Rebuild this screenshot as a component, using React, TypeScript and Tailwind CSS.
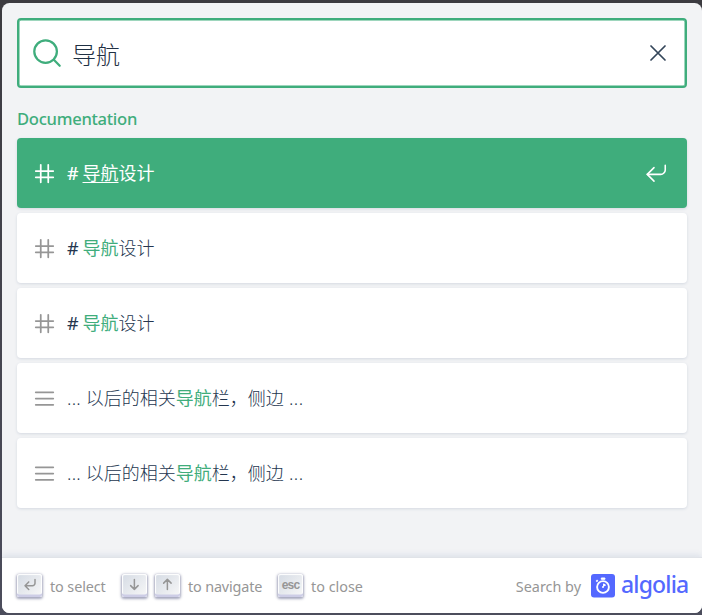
import type { ReactNode } from 'react';

const latin = "font-['Noto_Sans','Noto_Sans_CJK_SC',sans-serif]";

function Hit({ active = false, icon, children }: { active?: boolean; icon: 'hash' | 'lines'; children: ReactNode }) {
  return (
    <li
      className={
        active
          ? 'flex h-[70px] items-center rounded bg-[#3fad7c] px-[15px] text-white shadow-[0_1px_3px_0_#d4d9e1]'
          : 'flex h-[70px] items-center rounded bg-white px-[15px] text-[#24364f] shadow-[0_1px_3px_0_#d4d9e1]'
      }
    >
      <svg
        className={active ? 'size-[25px] shrink-0 text-white' : 'size-[25px] shrink-0 text-[#969696]'}
        viewBox="0 0 20 20"
        fill="none"
        stroke="currentColor"
        strokeWidth="1.4"
        strokeLinecap="round"
        strokeLinejoin="round"
      >
        {icon === 'hash' ? (
          <path d="M13 13h4-4V8H7v5h6v4-4H7V8H3h4V3v5h6V3v5h4-4v5zm-6 0v4-4H3h4z" />
        ) : (
          <path d="M17 5H3h14zm0 5H3h14zm0 5H3h14z" />
        )}
      </svg>
      <span className="ml-[10px] flex-1 whitespace-pre text-[18px] leading-[22px] font-light">{children}</span>
      {active && (
        <svg
          className="mr-[5px] size-[22.5px]"
          viewBox="0 0 20 20"
          fill="none"
          stroke="currentColor"
          strokeWidth="1.4"
          strokeLinecap="round"
          strokeLinejoin="round"
        >
          <path d="M18 3v4c0 2-2 4-4 4H2" />
          <path d="M8 17l-6-6 6-6" />
        </svg>
      )}
    </li>
  );
}

function Mark({ children }: { children: ReactNode }) {
  return <span className="font-normal text-[#3fad7c]">{children}</span>;
}

function Snippet() {
  return (
    <>
      <span className="tracking-[0.25px]">... </span>
      <span>
        以后的相关<Mark>导航</Mark>栏，侧边
      </span>
      <span className="tracking-[0.45px]"> ...</span>
    </>
  );
}

function Key({ children }: { children: ReactNode }) {
  return (
    <span className="flex h-[23px] w-[25px] shrink-0 items-center justify-center rounded-[2.5px] bg-[linear-gradient(-225deg,#d5dbe4,#f8f8f8)] pb-[2px] text-[#969696] shadow-[inset_0_-2.5px_0_0_#cdcde6,inset_0_0_1px_1px_#fff,0_1px_2.5px_1px_rgba(30,35,90,0.4)]">
      {children}
    </span>
  );
}

function KeyIcon({ d }: { d: string }) {
  return (
    <Key>
      <svg
        className="size-[18.75px]"
        viewBox="0 0 15 15"
        fill="none"
        stroke="currentColor"
        strokeWidth="1.2"
        strokeLinecap="round"
        strokeLinejoin="round"
      >
        <path d={d} />
      </svg>
    </Key>
  );
}

export default function App() {
  return (
    <div className={`h-[615px] w-[702px] overflow-hidden bg-[linear-gradient(#3c3b40,#4c4d5c)] pt-[3px] pl-[2px] ${latin}`}>
      <div className="flex h-[610px] w-[700px] flex-col overflow-hidden rounded-[7.5px] bg-[#f2f3f5]">
        <header className="px-[15px] pt-[15px]">
          <div className="flex h-[70px] items-center rounded border-2 border-[#3fad7c] bg-white pr-[12px] pl-[13px] shadow-[inset_0_0_0_0.5px_#3fad7c]">
            <svg
              className="size-[30px] text-[#3fad7c]"
              viewBox="0 0 20 20"
              fill="none"
              stroke="currentColor"
              strokeWidth="1.5"
              strokeLinecap="round"
              strokeLinejoin="round"
            >
              <path d="M14.386 14.386l4.0877 4.0877-4.0877-4.0877c-2.9418 2.9419-7.7115 2.9419-10.6533 0-2.9419-2.9418-2.9419-7.7115 0-10.6533 2.9418-2.9419 7.7115-2.9419 10.6533 0 2.9419 2.9418 2.9419 7.7115 0 10.6533z" />
            </svg>
            <span className="ml-[10px] flex-1 pt-[3px] text-[24px] leading-[30px] font-light text-[#1f3044]">导航</span>
            <svg
              className="mr-[0.5px] size-[30px] text-[#34465a]"
              viewBox="0 0 24 24"
              fill="none"
              stroke="currentColor"
              strokeWidth="1.4"
              strokeLinecap="round"
            >
              <path d="M6.4 6.4l11.2 11.2M17.6 6.4L6.4 17.6" />
            </svg>
          </div>
        </header>

        <main className="flex-1 px-[15px]">
          <h2 className="mt-[19px] mb-[7px] text-[16.6px] leading-[24px] font-medium tracking-[-0.28px] text-[#3fad7c]">
            Documentation
          </h2>
          <ul className="flex flex-col gap-[5px]">
            <Hit active icon="hash">
              <b className="font-medium tracking-[-0.4px]"># </b>
              <span className="font-normal">
                <span className="underline decoration-1 underline-offset-[2px]">导航</span>设计
              </span>
            </Hit>
            <Hit icon="hash">
              <span className="font-normal tracking-[-0.4px]"># </span>
              <Mark>导航</Mark>设计
            </Hit>
            <Hit icon="hash">
              <span className="font-normal tracking-[-0.4px]"># </span>
              <Mark>导航</Mark>设计
            </Hit>
            <Hit icon="lines">
              <Snippet />
            </Hit>
            <Hit icon="lines">
              <Snippet />
            </Hit>
          </ul>
        </main>

        <footer className="flex h-[55px] shrink-0 items-center bg-white pr-[15px] pl-[15px] text-[14.4px] leading-[20px] text-[#969696] shadow-[0_-1px_0_0_#e0e3e8,0_-3px_6px_0_rgba(69,98,155,0.12)]">
          <KeyIcon d="M12 3.53088v3c0 1-1 2-2 2H4M7 11.53088l-3-3 3-3" />
          <span className="ml-[8px] w-[72px] pt-[2px] tracking-[-0.1px] whitespace-nowrap">to select</span>
          <KeyIcon d="M7.5 3.5v8M10.5 8.5l-3 3-3-3" />
          <span className="w-[8px]" />
          <KeyIcon d="M7.5 11.5v-8M10.5 6.5l-3-3-3 3" />
          <span className="ml-[8px] w-[90px] pt-[2px] tracking-[-0.15px] whitespace-nowrap">to navigate</span>
          <Key>
            <span className="font-['Liberation_Sans',sans-serif] text-[12px] leading-[14px] font-bold tracking-[-0.8px]">esc</span>
          </Key>
          <span className="ml-[8px] pt-[2px] whitespace-nowrap">to close</span>
          <span className="ml-auto pt-[2px] whitespace-nowrap">Search by</span>
          <svg className="ml-[10px] size-[24px]" viewBox="0 0 24 24" fill="none">
            <rect width="24" height="23.5" rx="3" fill="#5468ff" />
            <circle cx="12" cy="13" r="5.9" stroke="#fff" strokeWidth="1.9" />
            <path d="M10.3 5.3V4h3.6v1.3z" fill="#fff" stroke="#fff" strokeWidth="1" />
            <path d="M5.3 7.6l1.4-1.4" stroke="#fff" strokeWidth="1.8" />
            <path d="M12 13V9.4c1.5 0 2.6.8 3.2 1.9z" fill="#fff" />
            <circle cx="12" cy="13" r="1" fill="#fff" />
          </svg>
          <span className="mb-[4px] ml-[6px] w-[66px] text-[23px] leading-[28px] font-medium tracking-[-0.85px] whitespace-nowrap text-[#5468ff]">
            algolia
          </span>
        </footer>
      </div>
    </div>
  );
}
